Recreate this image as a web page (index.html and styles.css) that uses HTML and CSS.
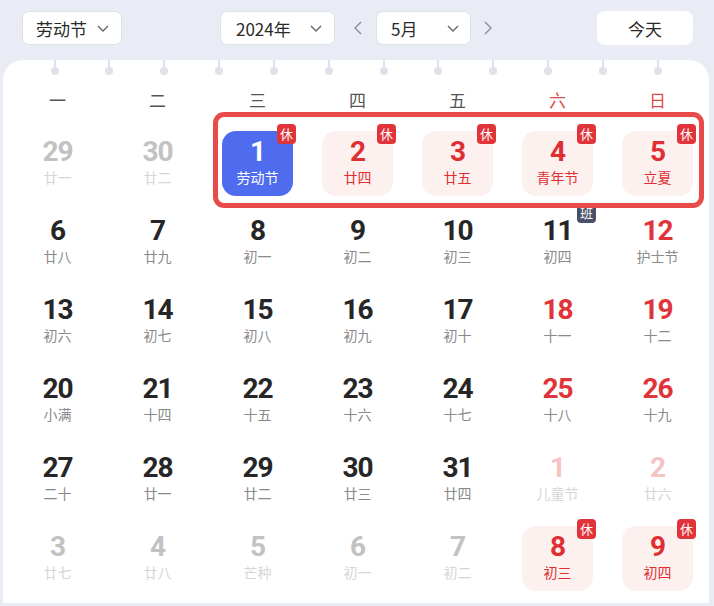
FILE: index.html
```html
<!DOCTYPE html>
<html lang="zh">
<head>
<meta charset="utf-8">
<link rel="stylesheet" href="styles.css">
</head>
<body>
<div class="toolbar">
  <div class="select sel-holiday"><span>劳动节</span><svg class="chev" width="12" height="7" viewBox="0 0 12 7"><polyline points="1,1 6,6 11,1"/></svg></div>
  <div class="select sel-year"><span>2024年</span><svg class="chev" width="12" height="7" viewBox="0 0 12 7"><polyline points="1,1 6,6 11,1"/></svg></div>
  <svg class="arrow arrow-prev" width="8" height="14" viewBox="0 0 8 14"><polyline points="7,1 1,7 7,13"/></svg>
  <div class="select sel-month"><span>5月</span><svg class="chev" width="12" height="7" viewBox="0 0 12 7"><polyline points="1,1 6,6 11,1"/></svg></div>
  <svg class="arrow arrow-next" width="8" height="14" viewBox="0 0 8 14"><polyline points="1,1 7,7 1,13"/></svg>
  <div class="btn-today">今天</div>
</div>

<div class="card">
  <div class="rings">
    <i></i><i></i><i></i><i></i><i></i><i></i><i></i><i></i><i></i><i></i><i></i><i></i>
  </div>
  <div class="week">
    <span>一</span><span>二</span><span>三</span><span>四</span><span>五</span><span class="we">六</span><span class="we">日</span>
  </div>
  <div class="grid">
    <div class="cell other"><b>29</b><small>廿一</small></div>
    <div class="cell other"><b>30</b><small>廿二</small></div>
    <div class="cell sel"><b>1</b><small>劳动节</small><em class="badge">休</em></div>
    <div class="cell hol"><b>2</b><small>廿四</small><em class="badge">休</em></div>
    <div class="cell hol"><b>3</b><small>廿五</small><em class="badge">休</em></div>
    <div class="cell hol"><b>4</b><small>青年节</small><em class="badge">休</em></div>
    <div class="cell hol"><b>5</b><small>立夏</small><em class="badge">休</em></div>

    <div class="cell"><b>6</b><small>廿八</small></div>
    <div class="cell"><b>7</b><small>廿九</small></div>
    <div class="cell"><b>8</b><small>初一</small></div>
    <div class="cell"><b>9</b><small>初二</small></div>
    <div class="cell"><b>10</b><small>初三</small></div>
    <div class="cell"><b>11</b><small>初四</small><em class="badge work">班</em></div>
    <div class="cell we"><b>12</b><small>护士节</small></div>

    <div class="cell"><b>13</b><small>初六</small></div>
    <div class="cell"><b>14</b><small>初七</small></div>
    <div class="cell"><b>15</b><small>初八</small></div>
    <div class="cell"><b>16</b><small>初九</small></div>
    <div class="cell"><b>17</b><small>初十</small></div>
    <div class="cell we"><b>18</b><small>十一</small></div>
    <div class="cell we"><b>19</b><small>十二</small></div>

    <div class="cell"><b>20</b><small>小满</small></div>
    <div class="cell"><b>21</b><small>十四</small></div>
    <div class="cell"><b>22</b><small>十五</small></div>
    <div class="cell"><b>23</b><small>十六</small></div>
    <div class="cell"><b>24</b><small>十七</small></div>
    <div class="cell we"><b>25</b><small>十八</small></div>
    <div class="cell we"><b>26</b><small>十九</small></div>

    <div class="cell"><b>27</b><small>二十</small></div>
    <div class="cell"><b>28</b><small>廿一</small></div>
    <div class="cell"><b>29</b><small>廿二</small></div>
    <div class="cell"><b>30</b><small>廿三</small></div>
    <div class="cell"><b>31</b><small>廿四</small></div>
    <div class="cell other we"><b>1</b><small>儿童节</small></div>
    <div class="cell other we"><b>2</b><small>廿六</small></div>

    <div class="cell other"><b>3</b><small>廿七</small></div>
    <div class="cell other"><b>4</b><small>廿八</small></div>
    <div class="cell other"><b>5</b><small>芒种</small></div>
    <div class="cell other"><b>6</b><small>初一</small></div>
    <div class="cell other"><b>7</b><small>初二</small></div>
    <div class="cell hol"><b>8</b><small>初三</small><em class="badge">休</em></div>
    <div class="cell hol"><b>9</b><small>初四</small><em class="badge">休</em></div>
  </div>
  <div class="holiday-frame"></div>
</div>
</body>
</html>
```

FILE: styles.css
```css
* { box-sizing: border-box; }
html, body { margin: 0; padding: 0; }
body {
  width: 714px;
  height: 606px;
  overflow: hidden;
  background: #e9ecf4;
  font-family: "Noto Sans CJK SC", "Noto Sans", sans-serif;
  color: #333;
}

.toolbar {
  height: 60px;
  display: flex;
  align-items: flex-start;
  padding: 11px 0 0 22px;
}
.select {
  height: 34px;
  background: #fff;
  border: 1px solid #dde1ea;
  border-radius: 7px;
  display: flex;
  align-items: center;
  justify-content: space-between;
  font-size: 17px;
  color: #2a2a2a;
}
.sel-holiday { width: 100px; padding: 0 12px 0 13px; }
.sel-year { width: 115px; margin-left: 98px; padding: 0 12px 0 15px; }
.sel-month { width: 95px; padding: 0 11px 0 14px; }
.chev { fill: none; stroke: #666; stroke-width: 1.4; }
.arrow { fill: none; stroke: #8a8d96; stroke-width: 1.4; margin-top: 10px; }
.arrow-prev { margin-left: 19px; margin-right: 14px; }
.arrow-next { margin-left: 13px; }
.btn-today {
  width: 96px;
  height: 34px;
  margin-left: 105px;
  background: #fff;
  border-radius: 8px;
  display: flex;
  align-items: center;
  justify-content: center;
  font-size: 17px;
  color: #2a2a2a;
}

.card {
  position: relative;
  margin-left: 3px;
  width: 706px;
  height: 543px;
  background: #fff;
  border-radius: 20px 20px 0 0;
}

.rings {
  display: flex;
  height: 16px;
  padding-left: 24px;
}
.rings i {
  width: 54.85px;
  height: 16px;
  position: relative;
}
.rings i::before {
  content: "";
  position: absolute;
  left: 26.5px;
  top: 0;
  width: 2px;
  height: 10px;
  background: #dfe2ea;
}
.rings i::after {
  content: "";
  position: absolute;
  left: 23.5px;
  top: 7px;
  width: 8px;
  height: 8px;
  border-radius: 50%;
  background: #dfe2ea;
}

.week {
  margin-top: 12px;
  padding-left: 19px;
  display: grid;
  grid-template-columns: repeat(7, 71px);
  column-gap: 29px;
  height: 24px;
  line-height: 24px;
  font-size: 17px;
  color: #555;
  text-align: center;
}
.week .we { color: #e04a4a; }

.grid {
  margin-top: 19px;
  padding-left: 19px;
  display: grid;
  grid-template-columns: repeat(7, 71px);
  grid-auto-rows: 65px;
  column-gap: 29px;
  row-gap: 14px;
}
.cell {
  position: relative;
  border-radius: 14px;
  display: flex;
  flex-direction: column;
  align-items: center;
  padding-top: 7px;
}
.cell b {
  font-family: Roboto, "Noto Sans", sans-serif;
  font-weight: 700;
  font-size: 28px;
  line-height: 28px;
  letter-spacing: -1px;
  color: #262626;
}
.cell small {
  margin-top: 2px;
  font-size: 14px;
  line-height: 18px;
  color: #8a8a8a;
}
.cell.we b { color: #e0343a; }
.cell.other b { color: #c2c2c2; }
.cell.other small { color: #d6d6d6; }
.cell.other.we b { color: #f4c4c4; }

.cell.hol { background: #fdf1ef; }
.cell.hol b, .cell.hol small { color: #df2f35; }
.cell.sel { background: #4f6cee; }
.cell.sel b, .cell.sel small { color: #fff; }

.badge {
  position: absolute;
  right: -3px;
  top: -7px;
  width: 19px;
  height: 20px;
  border-radius: 4px;
  background: #e0343a;
  color: #fff;
  font-style: normal;
  font-size: 13px;
  line-height: 20px;
  text-align: center;
}
.badge.work { background: #4a5068; }

.holiday-frame {
  position: absolute;
  left: 210px;
  top: 52px;
  width: 491px;
  height: 96px;
  border: 5px solid #e94a4a;
  border-radius: 11px;
  pointer-events: none;
}
```
